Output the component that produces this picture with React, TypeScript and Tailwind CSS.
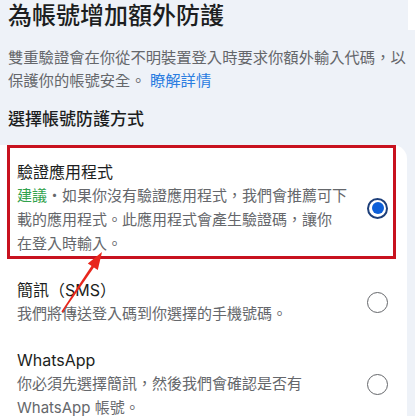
import React from 'react';

type Option = {
  id: string;
  title: string;
  lines: React.ReactNode[];
};

const options: Option[] = [
  {
    id: 'app',
    title: '驗證應用程式',
    lines: [
      <>
        <span className="text-[#31a24c]">建議</span>・如果你沒有驗證應用程式，我們會推薦可下
      </>,
      '載的應用程式。此應用程式會產生驗證碼，讓你',
      '在登入時輸入。',
    ],
  },
  {
    id: 'sms',
    title: '簡訊（SMS）',
    lines: ['我們將傳送登入碼到你選擇的手機號碼。'],
  },
  {
    id: 'whatsapp',
    title: 'WhatsApp',
    lines: ['你必須先選擇簡訊，然後我們會確認是否有', 'WhatsApp 帳號。'],
  },
];

const Radio: React.FC<{ checked: boolean }> = ({ checked }) =>
  checked ? (
    <div className="w-[21px] h-[21px] shrink-0 rounded-full border-[2.5px] border-[#1d3f7a] flex items-center justify-center">
      <div className="w-[12px] h-[12px] rounded-full bg-[#0d5fd8]" />
    </div>
  ) : (
    <div className="w-[21px] h-[21px] shrink-0 rounded-full border-[1.5px] border-[#65676b]" />
  );

export default function App() {
  const selected = 'app';

  return (
    <div
      className="relative w-[415px] h-[416px] overflow-hidden bg-[#eef2f8]"
      style={{ fontFamily: 'Inter, "Noto Sans CJK TC", "Noto Sans", sans-serif' }}
    >
      {/* Header */}
      <div className="pl-[8px] pr-[4px]">
        <h1 className="text-[24px] leading-[32px] font-medium text-[#1c1e21]">為帳號增加額外防護</h1>
        <p className="mt-[14px] text-[15.3px] leading-[23px] text-[#65676b] whitespace-nowrap">
          雙重驗證會在你從不明裝置登入時要求你額外輸入代碼，以
          <br />
          保護你的帳號安全。 <span className="text-[#2a7de1]">瞭解詳情</span>
        </p>
        <h2 className="mt-[15px] text-[17px] leading-[24px] font-medium text-[#1c1e21]">選擇帳號防護方式</h2>
      </div>

      {/* Options card */}
      <div className="mt-[19px] w-[407px] h-[300px] bg-white rounded-tr-[14px] pl-[7px] pr-[11px]">
        <div className="-mt-[5px] flex flex-col gap-[4px]">
          {options.map((opt) => (
            <div
              key={opt.id}
              className={`flex items-center gap-[12px] border-[3px] pl-[7px] pr-[5px] pt-[12px] ${
                opt.id === selected ? 'border-[#c8121f]' : 'border-transparent'
              }`}
            >
              <div className="flex-1 min-w-0">
                <p className="text-[16px] leading-[24px] text-[#1c1e21]">{opt.title}</p>
                <p className="text-[15px] leading-[24px] text-[#65676b] whitespace-nowrap">
                  {opt.lines.map((line, i) => (
                    <React.Fragment key={i}>
                      {i > 0 && <br />}
                      {line}
                    </React.Fragment>
                  ))}
                </p>
              </div>
              <Radio checked={opt.id === selected} />
            </div>
          ))}
        </div>
      </div>

      {/* screenshot corner artifact */}
      <div className="absolute top-0 right-0 w-[7px] h-[30px] bg-white" />

      {/* Annotation arrow */}
      <svg className="absolute inset-0 pointer-events-none" width="415" height="416" viewBox="0 0 415 416">
        <polygon points="61.4,311.6 62.6,312.4 94.2,267.0 91.8,265.4" fill="#e8261c" />
        <polygon points="102,252 97.8,270 87.8,263.4" fill="#e8261c" />
      </svg>
    </div>
  );
}
